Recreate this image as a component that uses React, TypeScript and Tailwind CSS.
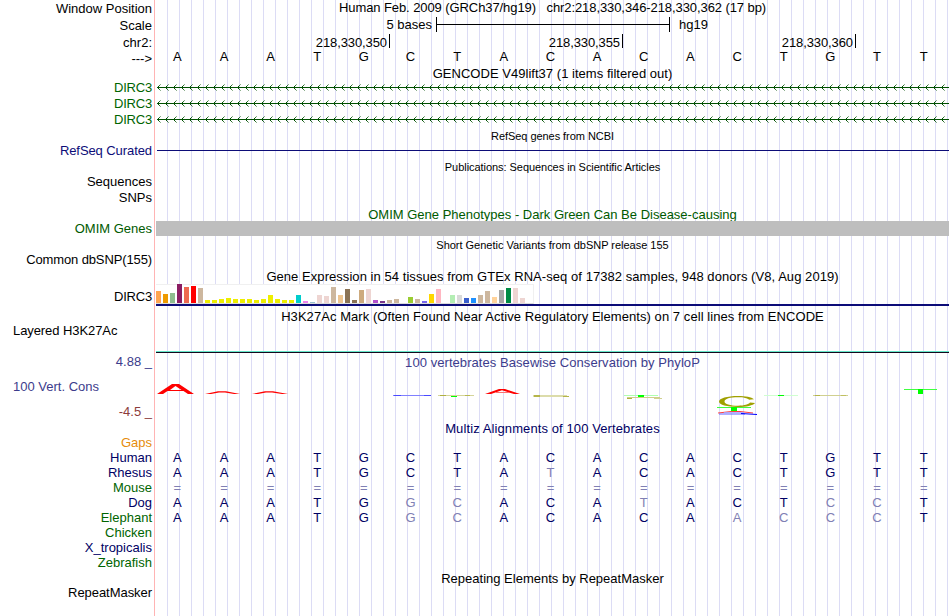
import React from 'react';

const labels: [string, string, string][] = [
  ['Window Position', 'h-[17px]', 'text-black'],
  ['Scale', 'h-[17px]', 'text-black'],
  ['chr2:', 'h-[16px]', 'text-black'],
  ['--->', 'h-[29px]', 'text-black'],
  ['DIRC3', 'h-[16px]', 'text-[#006400] tracking-[-0.2px]'],
  ['DIRC3', 'h-[16px]', 'text-[#006400] tracking-[-0.2px]'],
  ['DIRC3', 'h-[31px]', 'text-[#006400] tracking-[-0.2px]'],
  ['RefSeq Curated', 'h-[31px]', 'text-[#0c0c78] tracking-[-0.08px]'],
  ['Sequences', 'h-[16px]', 'text-black'],
  ['SNPs', 'h-[31px]', 'text-black'],
  ['OMIM Genes', 'h-[31px]', 'text-[#005a00]'],
  ['Common dbSNP(155)', 'h-[37px]', 'text-black tracking-[-0.12px]'],
  ['DIRC3', 'h-[34px]', 'text-black tracking-[-0.2px]'],
];

const species: [string, string][] = [
  ['Gaps', 'text-[#e68c0a]'],
  ['Human', 'text-[#000064]'],
  ['Rhesus', 'text-[#000064]'],
  ['Mouse', 'text-[#006400]'],
  ['Dog', 'text-[#000064]'],
  ['Elephant', 'text-[#006400]'],
  ['Chicken', 'text-[#006400]'],
  ['X_tropicalis', 'text-[#000064]'],
  ['Zebrafish', 'text-[#006400]'],
];

// Lower-case bases differ from the reference genome and are drawn faded.
const alignments = [
  'AAATGCTACACACTGTT',
  'AAATGCTAtACACTGTT',
  '=================',
  'AAATGgcACAtACTccT',
  'AAATGgcACACAacccT',
];

const tissues: [number, string][] = [
  [12, '#ffa54f'], [9, '#ee9a00'], [10, '#8fbc8f'], [19, '#8b1c62'], [16, '#ee6a50'],
  [17, '#ff0000'], [15, '#cdb79e'], [3, '#eeee00'], [3, '#eeee00'], [4, '#eeee00'],
  [5, '#eeee00'], [4, '#eeee00'], [4, '#eeee00'], [4, '#eeee00'], [3, '#eeee00'],
  [4, '#eeee00'], [8, '#eeee00'], [4, '#eeee00'], [3, '#eeee00'], [3, '#eeee00'],
  [8, '#00cdcd'], [2, '#ee82ee'], [1, '#9ac0cd'], [8, '#eed5d2'], [7, '#eed5d2'],
  [16, '#cdb79e'], [8, '#eec591'], [14, '#8b7355'], [3, '#8b7355'], [13, '#cdaa7d'],
  [14, '#eed5d2'], [3, '#b452cd'], [2, '#7a378b'], [3, '#cdb79e'], [4, '#cdb79e'],
  [0, '#cdb79e'], [6, '#9acd32'], [4, '#cdb79e'], [2, '#7a67ee'], [9, '#ffd700'],
  [14, '#ffb6c1'], [0, '#cd9b1d'], [8, '#b4eeb4'], [8, '#d9d9d9'], [5, '#3a5fcd'],
  [5, '#1e90ff'], [8, '#cdb79e'], [12, '#cdb79e'], [6, '#ffd39b'], [13, '#a6a6a6'],
  [15, '#008b45'], [15, '#eed5d2'], [5, '#eed5d2'], [0, '#ff00ff'],
];

function Bases({ seq, color }: { seq: string; color: string }) {
  return (
    <div className={`-ml-[2px] grid h-[15px] w-[793px] grid-cols-17 text-center ${color}`}>
      {seq.split('').map((b, i) => (
        <span key={i} className={/[a-z=]/.test(b) ? 'text-[#8080b4]' : ''}>
          {b.toUpperCase()}
        </span>
      ))}
    </div>
  );
}

function Title({ children, className = 'text-black' }: { children: React.ReactNode; className?: string }) {
  return <div className={`h-[15px] shrink-0 whitespace-pre text-center ${className}`}>{children}</div>;
}

function SmallTitle({ children, className }: { children: React.ReactNode; className: string }) {
  return (
    <div className={`h-[13px] shrink-0 whitespace-pre text-center text-[11px] leading-[13px] ${className}`}>
      {children}
    </div>
  );
}

function Strand() {
  const tips = Array.from({ length: 99 }, (_, i) => i * 8 + 1);
  return (
    <svg width="793" height="16" className="block shrink-0" shapeRendering="crispEdges">
      <rect x="1" y="6" width="792" height="1" fill="#005000" />
      {tips.map((x) => (
        <g key={x} fill="#005000">
          <rect x={x + 1} y="5" width="1" height="1" />
          <rect x={x + 1} y="7" width="1" height="1" />
          <rect x={x + 2} y="4" width="1" height="1" opacity=".8" />
          <rect x={x + 2} y="8" width="1" height="1" opacity=".8" />
          <rect x={x + 3} y="3" width="1" height="1" opacity=".45" />
          <rect x={x + 3} y="9" width="1" height="1" opacity=".45" />
        </g>
      ))}
    </svg>
  );
}

function Conservation() {
  return (
    <svg width="793" height="51" viewBox="156 370 793 51" className="block shrink-0">
      <path fill="#f00" fillRule="evenodd" d="M157 394L172 384H179L194 394H188L183.500 391H167.500L163 394ZM170 390H181.500L175.500 386Z" />
      <path fill="#f00" d="M205 394L218 391.200H226L240 394H234L225 392.400H219L211 394Z" />
      <path fill="#f00" d="M252 394L265 391.200H273L288 394H282L272 392.400H266L258 394Z" />
      <path fill="#f00" d="M485 394L499 389H505L520 394H514L502 390.300L491 394Z" />
      <rect x="496" y="392" width="13" height="1" fill="#ff7070" />
      <rect x="393" y="395" width="38" height="1" fill="#8080ff" />
      <rect x="394" y="395" width="7" height="1" fill="#4a4aff" />
      <rect x="424" y="395" width="7" height="1" fill="#4a4aff" />
      <rect x="438" y="395" width="36" height="1" fill="#d5d59a" />
      <rect x="440" y="395" width="6" height="1" fill="#b0b040" />
      <rect x="465" y="395" width="5" height="1" fill="#b8b850" />
      <rect x="451" y="396" width="6" height="1" fill="#0f0" />
      <rect x="533" y="395" width="34" height="2" fill="#dcdcaa" />
      <rect x="534" y="395" width="6" height="2" fill="#b5b54a" />
      <rect x="563" y="396" width="6" height="1" fill="#b5b54a" />
      <rect x="624" y="395" width="34" height="1" fill="#b0ffb0" />
      <rect x="638" y="395" width="6" height="2" fill="#0f0" />
      <rect x="627" y="397" width="33" height="1" fill="#cfcf8a" />
      <rect x="627" y="398" width="5" height="1" fill="#b0b040" />
      <rect x="654" y="398" width="8" height="1" fill="#d0d090" />
      <path
        fill="#a0a000"
        d="M754 399.200C751.500 397.200 745.500 396 738 396C727 396 719 398.300 719 401.600C719 404.900 727 407 738 407C746.500 407 753 405.500 755 403L750 402.600C748.500 404.500 744.500 405.700 738 405.700C730 405.700 724.500 404.200 724.500 401.500C724.500 398.800 730 397.300 738 397.300C743.500 397.300 747.500 398.200 749 399.700Z"
      />
      <rect x="717" y="407" width="34" height="1" fill="#40ff40" />
      <rect x="731" y="407" width="6" height="4" fill="#0f0" />
      <path fill="none" stroke="#ff4040" d="M718 413L731 411.500H740L753 413" />
      <path fill="none" stroke="#6060ff" d="M719 414H745" />
      <path fill="none" stroke="#a0a0ff" d="M724 412.700H744" />
      <path fill="none" stroke="#0000ff" d="M741 413.500L757 414.500" />
      <rect x="764" y="395" width="34" height="1" fill="#d0ffd0" />
      <rect x="778" y="395" width="6" height="1" fill="#0f0" />
      <rect x="813" y="395" width="35" height="1" fill="#d0d090" />
      <rect x="815" y="395" width="5" height="1" fill="#b5b54a" />
      <rect x="841" y="395" width="5" height="1" fill="#c0c060" />
      <rect x="904" y="389" width="33" height="1" fill="#40ff40" />
      <rect x="918" y="389" width="5" height="5" fill="#0f0" />
    </svg>
  );
}

function Coordinate({ value, width }: { value: string; width: string }) {
  return (
    <div className={`flex h-[14px] justify-end border-r border-black pr-[2px] pt-px tracking-[-0.1px] ${width}`}>
      {value}
    </div>
  );
}

export default function App() {
  return (
    <main className="flex h-[616px] w-[950px] overflow-hidden bg-white font-['Liberation_Sans',Arial,sans-serif] text-[13px] leading-[15px]">
      <div className="flex w-[154px] shrink-0 flex-col pr-[2px] pt-px text-right">
        {labels.map(([text, height, color], i) => (
          <div key={i} className={`shrink-0 whitespace-nowrap ${height} ${color}`}>{text}</div>
        ))}
        <div className="h-[31px] shrink-0 pl-[13px] text-left tracking-[-0.08px]">Layered H3K27Ac</div>
        <div className="h-[25px] shrink-0 text-[#3c3c8c]">4.88 _</div>
        <div className="h-[25px] shrink-0 pl-[13px] text-left text-[#3c3c8c]">100 Vert. Cons</div>
        <div className="h-[31px] shrink-0 text-[#8c3c3c]">-4.5 _</div>
        {species.map(([text, color]) => (
          <div key={text} className={`h-[15px] shrink-0 ${color}`}>{text}</div>
        ))}
        <div className="mt-[15px] h-[15px] shrink-0 tracking-[-0.05px]">RepeatMasker</div>
      </div>
      <div className="w-[795px] shrink-0 border-l border-[#ffb4b4] pl-px">
        <div className="flex h-[616px] w-[793px] flex-col bg-[repeating-linear-gradient(to_right,transparent_0px,transparent_11px,#dcdcf5_11px,#dcdcf5_12px)]">
          <Title className="tracking-[-0.085px]">{'Human Feb. 2009 (GRCh37/hg19)   chr2:218,330,346-218,330,362 (17 bp)'}</Title>
          <div className="mt-[2px] flex h-[15px] shrink-0">
            <span className="w-[276px] text-right">5 bases</span>
            <div className="ml-[4px] flex h-[15px] w-[234px] items-center border-x border-black">
              <div className="h-px w-full bg-black" />
            </div>
            <span className="ml-[9px]">hg19</span>
          </div>
          <div className="mt-[2px] flex h-[14px] shrink-0">
            <Coordinate value="218,330,350" width="w-[234px]" />
            <Coordinate value="218,330,355" width="w-[233px]" />
            <Coordinate value="218,330,360" width="w-[233px]" />
          </div>
          <div className="mt-px h-[17px] shrink-0">
            <Bases seq="AAATGCTACACACTGTT" color="text-black" />
          </div>
          <Title className="tracking-[0.03px]">GENCODE V49lift37 (1 items filtered out)</Title>
          <Strand />
          <Strand />
          <Strand />
          <SmallTitle className="mt-px tracking-[-0.05px]">RefSeq genes from NCBI</SmallTitle>
          <div className="ml-px mt-[7px] h-px shrink-0 bg-[#0c0c78]" />
          <SmallTitle className="mt-[10px] tracking-[-0.05px]">Publications: Sequences in Scientific Articles</SmallTitle>
          <div className="mt-[33px] h-[14px] shrink-0 overflow-hidden text-center text-[#005a00]">
            OMIM Gene Phenotypes - Dark Green Can Be Disease-causing
          </div>
          <div className="h-[15px] shrink-0 bg-[#bebebe]" />
          <SmallTitle className="mt-[3px] tracking-[-0.02px]">Short Genetic Variants from dbSNP release 155</SmallTitle>
          <Title className="mt-[17px] tracking-[0.055px]">
            Gene Expression in 54 tissues from GTEx RNA-seq of 17382 samples, 948 donors (V8, Aug 2019)
          </Title>
          <div className="flex h-[20px] w-[378px] shrink-0 items-end gap-[2px] border-b border-r border-t border-b-[#dcdcdc] border-r-[#f0f0f0] border-t-[#f0f0f0] bg-white">
            {tissues.map(([height, color], i) => (
              <div key={i} className="w-[5px] shrink-0" style={{ height, backgroundColor: color }} />
            ))}
          </div>
          <div className="h-[2px] shrink-0 bg-[#0c0c78]" />
          <Title className="mt-[3px] tracking-[0.06px]">
            H3K27Ac Mark (Often Found Near Active Regulatory Elements) on 7 cell lines from ENCODE
          </Title>
          <div className="mt-[27px] h-[2px] shrink-0 border-t border-[#64e6c8] bg-[#140a1e]" />
          <Title className="mt-[2px] tracking-[0.06px] text-[#3c3c8c]">100 vertebrates Basewise Conservation by PhyloP</Title>
          <Conservation />
          <Title className="tracking-[0.1px] text-[#000064]">Multiz Alignments of 100 Vertebrates</Title>
          <div className="mt-[14px] shrink-0">
            {alignments.map((seq) => (
              <Bases key={seq} seq={seq} color="text-[#000064]" />
            ))}
          </div>
          <Title className="mt-[46px]">Repeating Elements by RepeatMasker</Title>
        </div>
      </div>
    </main>
  );
}
